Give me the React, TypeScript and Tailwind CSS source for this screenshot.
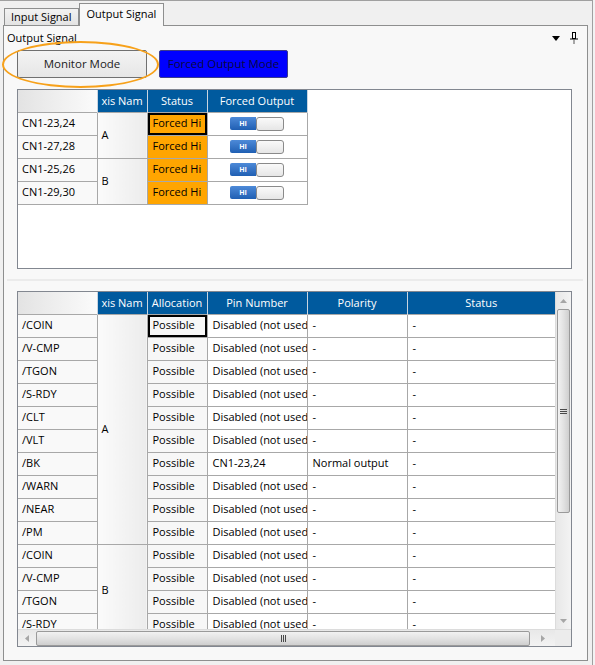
import React from 'react'

type TopRow = { pin: string; axis?: string; span?: number; selected?: boolean }

const topRows: TopRow[] = [
  { pin: 'CN1-23,24', axis: 'A', span: 2, selected: true },
  { pin: 'CN1-27,28' },
  { pin: 'CN1-25,26', axis: 'B', span: 2 },
  { pin: 'CN1-29,30' },
]

type SigRow = { name: string; axis?: string; span?: number; pin: string; polarity: string; selected?: boolean }

const disabled = 'Disabled (not used)'

const signalRows: SigRow[] = [
  { name: '/COIN', axis: 'A', span: 10, pin: disabled, polarity: '-', selected: true },
  { name: '/V-CMP', pin: disabled, polarity: '-' },
  { name: '/TGON', pin: disabled, polarity: '-' },
  { name: '/S-RDY', pin: disabled, polarity: '-' },
  { name: '/CLT', pin: disabled, polarity: '-' },
  { name: '/VLT', pin: disabled, polarity: '-' },
  { name: '/BK', pin: 'CN1-23,24', polarity: 'Normal output' },
  { name: '/WARN', pin: disabled, polarity: '-' },
  { name: '/NEAR', pin: disabled, polarity: '-' },
  { name: '/PM', pin: disabled, polarity: '-' },
  { name: '/COIN', axis: 'B', span: 4, pin: disabled, polarity: '-' },
  { name: '/V-CMP', pin: disabled, polarity: '-' },
  { name: '/TGON', pin: disabled, polarity: '-' },
  { name: '/S-RDY', pin: disabled, polarity: '-' },
]

const th = 'h-[22px] p-0 font-normal text-white bg-[#005a9e] border-x border-[#c8d4e0] text-center whitespace-nowrap overflow-hidden'
const td = 'h-[23px] p-0 border border-[#a8a8a8] whitespace-nowrap overflow-hidden'

function Toggle() {
  return (
    <div className="flex items-center justify-center">
      <div className="w-[26px] h-[13px] rounded-l-[2px] bg-linear-to-b from-[#4d8ad8] to-[#1f5fb3] text-white text-[7px] font-bold leading-[13px] text-center">
        HI
      </div>
      <div className="w-[28px] h-[14px] rounded-[3px] border border-[#8a8a8a] bg-linear-to-b from-[#fafafa] to-[#e6e6e6]" />
    </div>
  )
}

function Triangle({ dir }: { dir: 'up' | 'down' | 'left' | 'right' }) {
  const points = {
    up: '0,4 3.5,0 7,4',
    down: '0,0 7,0 3.5,4',
    left: '4,0 4,7 0,3.5',
    right: '0,0 0,7 4,3.5',
  }[dir]
  const w = dir === 'up' || dir === 'down' ? 7 : 4
  const h = dir === 'up' || dir === 'down' ? 4 : 7
  return (
    <svg width={w} height={h} viewBox={`0 0 ${w} ${h}`}>
      <polygon points={points} fill="#a6a6a6" />
    </svg>
  )
}

function VScroll() {
  return (
    <div className="w-[16px] flex flex-col bg-linear-to-r from-[#e8e8e8] to-[#f3f3f3] border-l border-[#dcdcdc]">
      <div className="h-[17px] flex items-center justify-center">
        <Triangle dir="up" />
      </div>
      <div className="mx-px h-[204px] rounded-[2px] border border-[#9a9a9a] bg-linear-to-r from-[#f2f2f2] via-[#e2e2e2] to-[#cfcfcf] flex flex-col items-center justify-center gap-px">
        <div className="w-[7px] h-px bg-[#4a4a4a]" />
        <div className="w-[7px] h-px bg-[#4a4a4a]" />
        <div className="w-[7px] h-px bg-[#4a4a4a]" />
      </div>
      <div className="flex-1" />
      <div className="h-[17px] flex items-center justify-center">
        <Triangle dir="down" />
      </div>
    </div>
  )
}

function HScroll() {
  return (
    <div className="h-[17px] flex border-t border-[#dcdcdc]">
      <div className="w-[537px] flex items-center bg-linear-to-b from-[#e8e8e8] to-[#f3f3f3]">
        <div className="w-[18px] flex items-center justify-center">
          <Triangle dir="left" />
        </div>
        <div className="w-[494px] h-[15px] rounded-[2px] border border-[#9a9a9a] bg-linear-to-b from-[#f2f2f2] via-[#e2e2e2] to-[#cfcfcf] flex items-center justify-center gap-px">
          <div className="w-px h-[7px] bg-[#4a4a4a]" />
          <div className="w-px h-[7px] bg-[#4a4a4a]" />
          <div className="w-px h-[7px] bg-[#4a4a4a]" />
        </div>
        <div className="flex-1 flex items-center justify-center">
          <Triangle dir="right" />
        </div>
      </div>
      <div className="w-[16px] bg-[#ececec]" />
    </div>
  )
}

export default function App() {
  return (
    <div className="w-[595px] h-[665px] overflow-hidden bg-[#f3f3f3] text-[11px] text-black font-['Open_Sans','Noto_Sans',sans-serif]">
      <div className="w-[593px] h-[665px] border-t border-r border-[#a0a0a0] bg-[#f0f0f0] pt-[2px]">
        {/* tabs */}
        <div className="flex items-end ml-[4px] h-[22px]">
          <div className="h-[17px] px-[6px] border border-b-0 border-[#8e8f8f] bg-linear-to-b from-[#f2f2f2] to-[#e3e3e3] leading-[16px]">
            Input Signal
          </div>
          <div className="relative z-10 h-[23px] -mb-px px-[7px] border border-b-0 border-[#8e8f8f] bg-[#f8f8f8] leading-[20px]">
            Output Signal
          </div>
        </div>

        {/* panel */}
        <div className="ml-[3px] w-[585px] h-[636px] border border-[#8e8f8f] bg-[#f8f8f8] relative">
          <div className="h-[24px] flex items-center justify-between pl-[3px] pr-[9px]">
            <span>Output Signal</span>
            <div className="flex items-center gap-[10px]">
              <svg width="8" height="5" viewBox="0 0 8 5">
                <polygon points="0,0 8,0 4,5" fill="#000" />
              </svg>
              <svg width="8" height="12" viewBox="0 0 8 12">
                <rect x="2.5" y="0.5" width="3" height="6" fill="none" stroke="#000" />
                <line x1="0" y1="7" x2="8" y2="7" stroke="#000" />
                <line x1="4" y1="7" x2="4" y2="12" stroke="#555" />
              </svg>
            </div>
          </div>

          {/* mode buttons */}
          <div className="flex gap-[12px] ml-[13px] h-[28px]">
            <button className="w-[130px] h-[28px] rounded-[2px] border border-[#707070] bg-linear-to-b from-[#f3f3f3] to-[#e6e6e6] text-[11.5px] text-[#222]">
              Monitor Mode
            </button>
            <button className="w-[129px] h-[28px] rounded-[2px] border border-[#3c3c8c] bg-[#0000ff] text-[11.5px] text-[#0a0a40]">
              Forced Output Mode
            </button>
          </div>
          <div className="absolute left-[-2px] top-[15px] w-[157px] h-[47px] rounded-[50%] border-[2.5px] border-[#f7a11a] pointer-events-none" />

          {/* top table */}
          <div className="ml-[13px] mt-[11px] w-[555px] h-[180px] border border-[#828790] bg-white overflow-hidden">
            <table className="table-fixed border-collapse w-[289px]">
              <colgroup>
                <col className="w-[79px]" />
                <col className="w-[50px]" />
                <col className="w-[60px]" />
                <col className="w-[100px]" />
              </colgroup>
              <thead>
                <tr>
                  <th className="h-[22px] p-0 bg-linear-to-r from-[#e3e3e3] to-[#fbfbfb] border-r border-[#c8d4e0]" />
                  <th className={th}>xis Nam</th>
                  <th className={th}>Status</th>
                  <th className={th}>Forced Output</th>
                </tr>
              </thead>
              <tbody>
                {topRows.map((r) => (
                  <tr key={r.pin}>
                    <td className={`${td} border-l-0 pl-[4px] bg-[#f9f9f9]`}>{r.pin}</td>
                    {r.axis && (
                      <td rowSpan={r.span} className={`${td} pl-[4px] bg-linear-to-r from-[#fbfbfb] to-[#ececec]`}>
                        {r.axis}
                      </td>
                    )}
                    <td className={`${td} pl-[5px] bg-[#ffa500] ${r.selected ? 'shadow-[inset_0_0_0_2px_#000]' : ''}`}>
                      Forced Hi
                    </td>
                    <td className={td}>
                      <Toggle />
                    </td>
                  </tr>
                ))}
              </tbody>
            </table>
          </div>

          <div className="ml-[3px] mt-[10px] w-[576px] h-[2px] bg-[#ebebeb]" />

          {/* signal table */}
          <div className="ml-[13px] mt-[10px] w-[555px] h-[356px] border border-[#828790] bg-white flex flex-col">
            <div className="flex h-[337px]">
              <div className="w-[537px] overflow-hidden">
                <table className="table-fixed border-collapse w-[537px]">
                  <colgroup>
                    <col className="w-[79px]" />
                    <col className="w-[50px]" />
                    <col className="w-[60px]" />
                    <col className="w-[100px]" />
                    <col className="w-[100px]" />
                    <col className="w-[148px]" />
                  </colgroup>
                  <thead>
                    <tr>
                      <th className="h-[22px] p-0 bg-linear-to-r from-[#e3e3e3] to-[#fbfbfb] border-r border-[#c8d4e0]" />
                      <th className={th}>xis Nam</th>
                      <th className={th}>Allocation</th>
                      <th className={th}>Pin Number</th>
                      <th className={th}>Polarity</th>
                      <th className={`${th} border-r-0`}>Status</th>
                    </tr>
                  </thead>
                  <tbody>
                    {signalRows.map((r, i) => (
                      <tr key={i}>
                        <td className={`${td} border-l-0 pl-[4px] bg-[#f9f9f9]`}>{r.name}</td>
                        {r.axis && (
                          <td rowSpan={r.span} className={`${td} pl-[4px] bg-linear-to-r from-[#fbfbfb] to-[#ececec]`}>
                            {r.axis}
                          </td>
                        )}
                        <td className={`${td} pl-[5px] bg-[#f7f7f7] ${r.selected ? 'shadow-[inset_0_0_0_2px_#000]' : ''}`}>
                          Possible
                        </td>
                        <td className={`${td} pl-[5px]`}>{r.pin}</td>
                        <td className={`${td} pl-[5px]`}>{r.polarity}</td>
                        <td className={`${td} border-r-0 pl-[5px]`}>-</td>
                      </tr>
                    ))}
                  </tbody>
                </table>
              </div>
              <VScroll />
            </div>
            <HScroll />
          </div>
        </div>
      </div>
    </div>
  )
}
